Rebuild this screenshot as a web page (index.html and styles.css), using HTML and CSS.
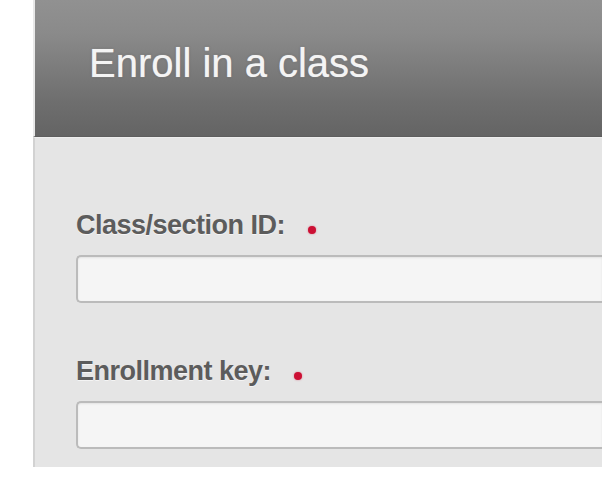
FILE: index.html
```html
<!DOCTYPE html>
<html>
<head>
<meta charset="utf-8">
<link rel="stylesheet" href="styles.css">
</head>
<body>
<div class="panel">
  <div class="header"><h1 class="title">Enroll in a class</h1></div>
  <form class="form">
    <div class="field">
      <label class="label">Class/section ID:<span class="req"></span></label>
      <input class="input" type="text">
    </div>
    <div class="field field-2">
      <label class="label">Enrollment key:<span class="req"></span></label>
      <input class="input" type="text">
    </div>
  </form>
</div>
</body>
</html>
```

FILE: styles.css
```css
html, body {
  margin: 0;
  padding: 0;
  background: #ffffff;
}
.panel {
  margin-left: 33px;
  font-family: "Liberation Sans", Arial, sans-serif;
}
.header {
  height: 137px;
  box-sizing: border-box;
  padding: 39px 0 0 54px;
  background: linear-gradient(#919191, #8a8a8a 25%, #6e6e6e 75%, #646464);
  border-left: 2px solid #e8e8e8;
  border-bottom: 1px solid #5e5e5e;
}
.title {
  margin: 0;
  font-size: 40px;
  line-height: 48px;
  font-weight: normal;
  color: #f4f4f4;
  text-shadow: 0 0 1px rgba(255,255,255,0.6), 0 0 3px rgba(0,0,0,0.2);
}
.form {
  margin: 0;
  background: #e5e5e5;
  border-top: 1px solid #ededed;
  border-left: 2px solid #d2d2d2;
  box-sizing: border-box;
  height: 330px;
  padding: 71px 0 0 41px;
}
.field {
  display: flex;
  flex-direction: column;
  align-items: stretch;
}
.field-2 {
  margin-top: 52px;
}
.label {
  font-size: 27px;
  line-height: 32px;
  font-weight: bold;
  letter-spacing: -0.5px;
  color: #5c5c5c;
  text-shadow: 0 1px 0 rgba(255,255,255,0.6);
  margin-bottom: 14px;
  display: flex;
  align-items: center;
}
.req {
  display: inline-block;
  width: 8px;
  height: 8px;
  border-radius: 50%;
  background: #cc1034;
  margin-left: 23px;
  margin-top: 9px;
  box-shadow: 0 0 2px rgba(204,16,52,0.5);
}
.input {
  height: 48px;
  box-sizing: border-box;
  border: 2px solid #bbbbbb;
  border-right: none;
  border-radius: 5px 0 0 5px;
  background: #f5f5f5;
  box-shadow: inset 0 1px 2px rgba(0,0,0,0.08);
  margin: 0;
  padding: 0 10px;
  font-size: 20px;
  outline: none;
}
```
